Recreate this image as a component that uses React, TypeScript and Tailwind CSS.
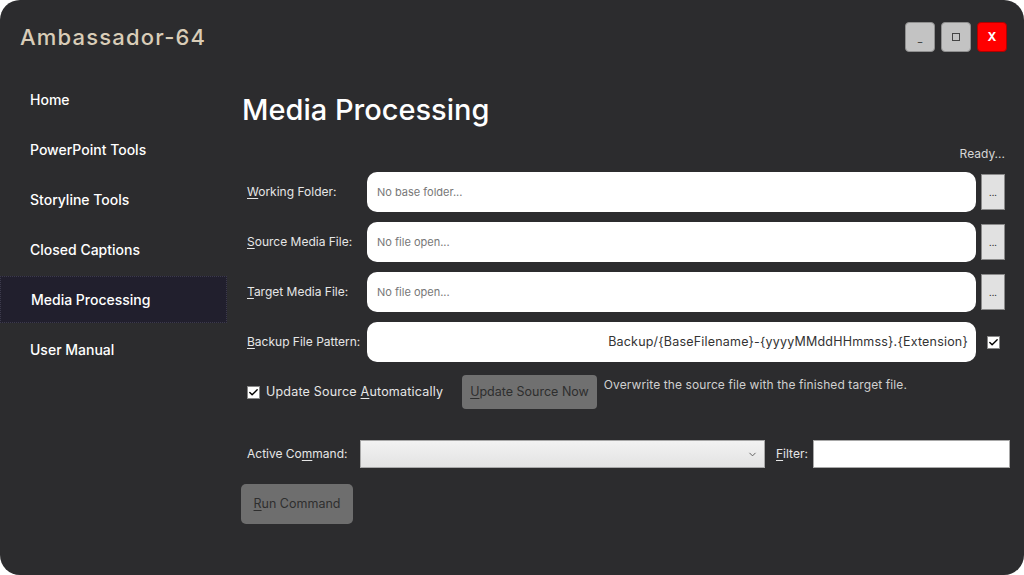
import { Check, ChevronDown } from 'lucide-react'

const font = { fontFamily: 'Inter, "Noto Sans", sans-serif' }

const nav = ['Home', 'PowerPoint Tools', 'Storyline Tools', 'Closed Captions', 'Media Processing', 'User Manual']

function Key({ k, rest, pre = '' }: { k: string; rest: string; pre?: string }) {
  return (
    <>
      {pre}
      <span className="underline underline-offset-2">{k}</span>
      {rest}
    </>
  )
}

function FileRow({ label, value, right }: { label: React.ReactNode; value: string; right?: boolean }) {
  return (
    <div className="flex items-center h-[40px]">
      <label className="w-[125px] pl-[5px] text-[12px] text-[#e6e6e6] shrink-0">{label}</label>
      <div
        className={`flex-1 h-[40px] bg-white rounded-[10px] flex items-center px-[10px] text-[11px] ${
          right ? 'justify-end text-[#333] text-[12.5px] tracking-[0.2px] pr-[8px]' : 'text-[#777]'
        }`}
      >
        {value}
      </div>
      {right ? (
        <div className="w-[29px] flex justify-end">
          <div className="w-[13px] h-[13px] bg-white border border-[#888] flex items-center justify-center mr-[5px]">
            <Check size={11} strokeWidth={3} className="text-black" />
          </div>
        </div>
      ) : (
        <div className="ml-[5px] w-[24px] h-[36px] bg-[#e1e1e1] border border-[#8a8a8a] flex items-center justify-center text-[9px] text-[#333] leading-none">
          ...
        </div>
      )}
    </div>
  )
}

export default function App() {
  return (
    <div className="w-[1024px] h-[575px] bg-white" style={font}>
      <div className="w-full h-full bg-[#2c2c2e] rounded-[20px] overflow-hidden flex flex-col">
        {/* Title bar */}
        <div className="flex items-center justify-between h-[76px] pl-[20px] pr-[17px] pb-[2px]">
          <h1 className="text-[22px] font-medium text-[#d9cdb8] tracking-[1.2px]">Ambassador-64</h1>
          <div className="flex gap-[6px]">
            <button className="w-[30px] h-[30px] rounded-[4px] bg-[#c3c3c3] border border-[#8f8f8f] flex items-end justify-center pb-[8px] text-[10px] text-[#333] leading-none">
              _
            </button>
            <button className="w-[30px] h-[30px] rounded-[4px] bg-[#c3c3c3] border border-[#8f8f8f] flex items-center justify-center">
              <span className="w-[8px] h-[8px] border border-[#444]" />
            </button>
            <button className="w-[30px] h-[30px] rounded-[4px] bg-[#ff0000] border border-[#b00000] flex items-center justify-center text-white text-[12px] font-bold">
              X
            </button>
          </div>
        </div>

        <div className="flex flex-1">
          {/* Sidebar */}
          <nav className="w-[227px] shrink-0 flex flex-col">
            {nav.map((n) => (
              <div
                key={n}
                className={`h-[47px] mb-[3px] flex items-center pl-[30px] text-[14px] font-medium text-white ${
                  n === 'Media Processing' ? 'bg-[#211f2d] border border-dotted border-[#3c3a4c] pl-[29px]' : ''
                }`}
              >
                {n}
              </div>
            ))}
          </nav>

          {/* Main */}
          <main className="flex-1 pl-[15px] pr-[14px]">
            <h2 className="text-[29px] font-medium text-white leading-none mt-[19px]">Media Processing</h2>
            <div className="text-right text-[12px] text-[#d6d6d6] mt-[21px] h-[18px] pr-[5px]">Ready...</div>

            <div className="flex flex-col gap-[10px] mt-[9px] pr-[5px]">
              <FileRow label={<Key k="W" rest="orking Folder:" />} value="No base folder..." />
              <FileRow label={<Key k="S" rest="ource Media File:" />} value="No file open..." />
              <FileRow label={<Key k="T" rest="arget Media File:" />} value="No file open..." />
              <FileRow
                label={<Key k="B" rest="ackup File Pattern:" />}
                value="Backup/{BaseFilename}-{yyyyMMddHHmmss}.{Extension}"
                right
              />
            </div>

            <div className="flex items-start mt-[13px] pl-[5px]">
              <div className="flex items-center h-[34px]">
                <div className="w-[13px] h-[13px] bg-white border border-[#888] flex items-center justify-center">
                  <Check size={11} strokeWidth={3} className="text-black" />
                </div>
                <span className="ml-[6px] text-[12.5px] tracking-[0.2px] text-[#e6e6e6]">
                  <Key pre="Update Source " k="A" rest="utomatically" />
                </span>
              </div>
              <button className="ml-[19px] h-[34px] px-[8px] rounded-[4px] bg-[#707070] text-[12.5px] text-[#2e2e2e]">
                <Key k="U" rest="pdate Source Now" />
              </button>
              <span className="ml-[7px] mt-[1px] text-[12px] tracking-[0.1px] text-[#d0d0d0]">
                Overwrite the source file with the finished target file.
              </span>
            </div>

            <div className="flex items-center mt-[31px] pl-[5px]">
              <span className="text-[12px] text-[#e6e6e6] w-[113px] shrink-0">
                <Key pre="Active Co" k="m" rest="mand:" />
              </span>
              <div className="w-[405px] h-[28px] border border-[#a8a8a8] bg-gradient-to-b from-[#f2f2f2] to-[#e3e3e3] flex items-center justify-end pr-[6px]">
                <ChevronDown size={11} className="text-[#555]" />
              </div>
              <span className="ml-[11px] text-[12px] text-[#e6e6e6]">
                <Key k="F" rest="ilter:" />
              </span>
              <div className="ml-[5px] flex-1 h-[28px] bg-white border border-[#a8a8a8]" />
            </div>

            <button className="mt-[16px] -ml-[1px] h-[40px] w-[112px] rounded-[5px] bg-[#6e6e6e] text-[12.5px] text-[#2e2e2e]">
              <Key k="R" rest="un Command" />
            </button>
          </main>
        </div>
      </div>
    </div>
  )
}
